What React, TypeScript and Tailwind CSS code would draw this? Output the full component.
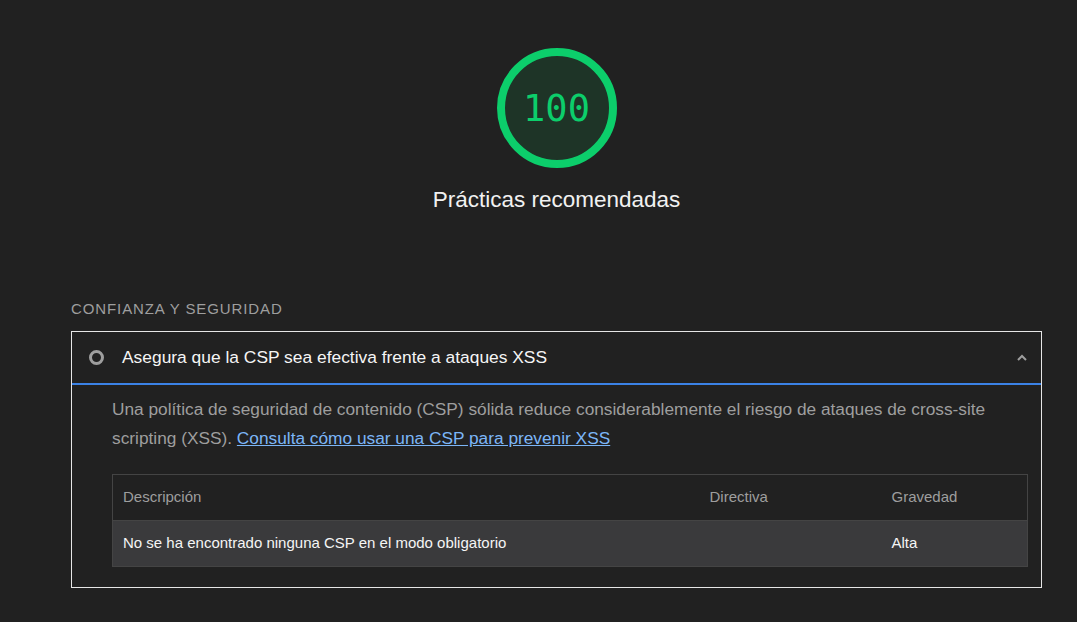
export default function App() {
  return (
    <div className="min-h-[622px] w-full bg-[#212121] pl-[71px] pr-[35px] font-['Liberation_Sans',Arial,sans-serif]">
      {/* Score gauge */}
      <div className="flex flex-col items-center pt-[48px]">
        <div className="flex h-[120px] w-[120px] items-center justify-center rounded-full border-[8px] border-[#0cce6b] bg-[#1e3427]">
          <span className="font-['DejaVu_Sans_Mono',monospace] text-[37px] leading-none text-[#0cce6b]">100</span>
        </div>
        <h1 className="mt-[18px] text-[22.5px] leading-[28px] text-[#f1f1f1]">Prácticas recomendadas</h1>
      </div>

      {/* Group label */}
      <div className="mt-[86px] text-[15px] leading-[18px] tracking-[0.06em] text-[#9e9e9e]">CONFIANZA Y SEGURIDAD</div>

      {/* Audit */}
      <div className="mt-[13px] border border-[#e6e6e6]">
        <div className="flex h-[53px] items-center border-b-2 border-[#3b82e6] pl-[17px] pr-[11px]">
          <span className="h-[15px] w-[15px] rounded-full border-[3px] border-[#9e9e9e]" />
          <span className="ml-[18px] flex-1 text-[17.4px] text-[#f5f5f5]">Asegura que la CSP sea efectiva frente a ataques XSS</span>
          <svg width="16" height="16" viewBox="0 0 24 24" fill="none" stroke="#9e9e9e" strokeWidth="3">
            <path d="M6 15l6-6 6 6" />
          </svg>
        </div>

        <div className="pb-[20px] pl-[40px] pr-[13px] pt-[10px]">
          <p className="text-[17.3px] leading-[29px] text-[#9e9e9e]">
            Una política de seguridad de contenido (CSP) sólida reduce considerablemente el riesgo de ataques de cross-site
            scripting (XSS).{" "}
            <a href="#" className="text-[#7cb6f7] underline">Consulta cómo usar una CSP para prevenir XSS</a>
          </p>

          <table className="mt-[21px] w-full border border-[#444] text-left text-[15px]">
            <thead>
              <tr className="h-[46px] text-[#9e9e9e]">
                <th className="pl-[10px] font-normal">Descripción</th>
                <th className="w-[182px] font-normal">Directiva</th>
                <th className="w-[136px] font-normal">Gravedad</th>
              </tr>
            </thead>
            <tbody>
              <tr className="h-[46px] border-t border-[#444] bg-[#3a3a3c] text-[#f5f5f5]">
                <td className="pl-[10px]">No se ha encontrado ninguna CSP en el modo obligatorio</td>
                <td></td>
                <td>Alta</td>
              </tr>
            </tbody>
          </table>
        </div>
      </div>
    </div>
  );
}
